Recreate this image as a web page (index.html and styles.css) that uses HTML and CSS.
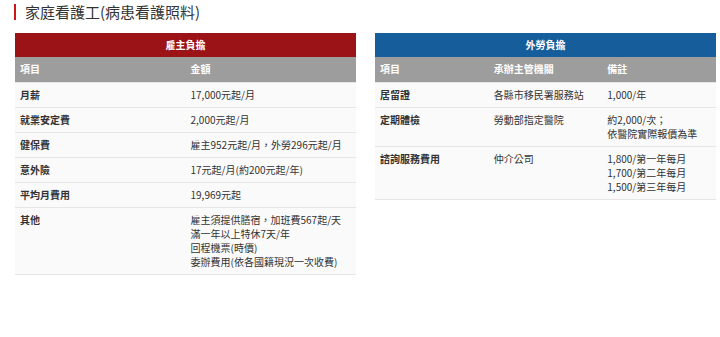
FILE: index.html
```html
<!DOCTYPE html>
<html lang="zh-Hant">
<head>
<meta charset="utf-8">
<link rel="stylesheet" href="styles.css">
</head>
<body>
<div class="page">
  <h2 class="title">家庭看護工(病患看護照料)</h2>
  <div class="tables">
    <table class="fee fee-employer">
      <thead>
        <tr class="cap"><th colspan="2">雇主負擔</th></tr>
        <tr class="head"><th>項目</th><th>金額</th></tr>
      </thead>
      <tbody>
        <tr><td class="k">月薪</td><td>17,000元起/月</td></tr>
        <tr><td class="k">就業安定費</td><td>2,000元起/月</td></tr>
        <tr><td class="k">健保費</td><td>雇主952元起/月，外勞296元起/月</td></tr>
        <tr><td class="k">意外險</td><td>17元起/月(約200元起/年)</td></tr>
        <tr><td class="k">平均月費用</td><td>19,969元起</td></tr>
        <tr><td class="k">其他</td><td>雇主須提供膳宿，加班費567起/天<br>滿一年以上特休7天/年<br>回程機票(時價)<br>委辦費用(依各國籍現況一次收費)</td></tr>
      </tbody>
    </table>
    <table class="fee fee-worker three">
      <thead>
        <tr class="cap"><th colspan="3">外勞負擔</th></tr>
        <tr class="head"><th>項目</th><th>承辦主管機關</th><th>備註</th></tr>
      </thead>
      <tbody>
        <tr><td class="k">居留證</td><td>各縣市移民署服務站</td><td>1,000/年</td></tr>
        <tr><td class="k">定期體檢</td><td>勞動部指定醫院</td><td>約2,000/次；<br>依醫院實際報價為準</td></tr>
        <tr><td class="k">諮詢服務費用</td><td>仲介公司</td><td>1,800/第一年每月<br>1,700/第二年每月<br>1,500/第三年每月</td></tr>
      </tbody>
    </table>
  </div>
</div>
</body>
</html>
```

FILE: styles.css
```css
* { box-sizing: border-box; }
html, body { margin: 0; padding: 0; background: #fff; }
body {
  font-family: "Noto Sans CJK TC", "Noto Sans", sans-serif;
  color: #333;
  font-size: 10px;
}
.page { padding: 4px 0 0 14px; }
.title {
  margin: 0 0 13px 0;
  border-left: 2.5px solid #d0121a;
  padding-left: 9px;
  font-size: 15px;
  font-weight: 400;
  line-height: 16px;
  height: 16px;
  color: #333;
  display: flex;
  align-items: center;
}
.tables {
  display: grid;
  grid-template-columns: 341px 341px;
  column-gap: 19px;
  align-items: start;
  padding-left: 1px;
}
.fee {
  width: 341px;
  border-collapse: collapse;
  table-layout: fixed;
}
.fee th, .fee td {
  padding: 5px 5px;
  line-height: 14px;
  text-align: left;
  vertical-align: top;
}
.fee .cap th {
  text-align: center;
  color: #fff;
  font-weight: 700;
  height: 24px;
}
.fee-employer .cap th { background: #9b1317; }
.fee-worker .cap th { background: #165e9b; }
.fee .head th {
  background: #9d9d9d;
  color: #fff;
  font-weight: 700;
  height: 25px;
  border-bottom: 1px solid #e4e4e4;
}
.fee td {
  background: #fafafa;
  border-bottom: 1px solid #e6e6e6;
  color: #333;
}
.fee td.k { font-weight: 700; }
.fee-employer th:first-child, .fee-employer td:first-child { width: 50%; }
.three th, .three td { width: 33.333%; }
```
